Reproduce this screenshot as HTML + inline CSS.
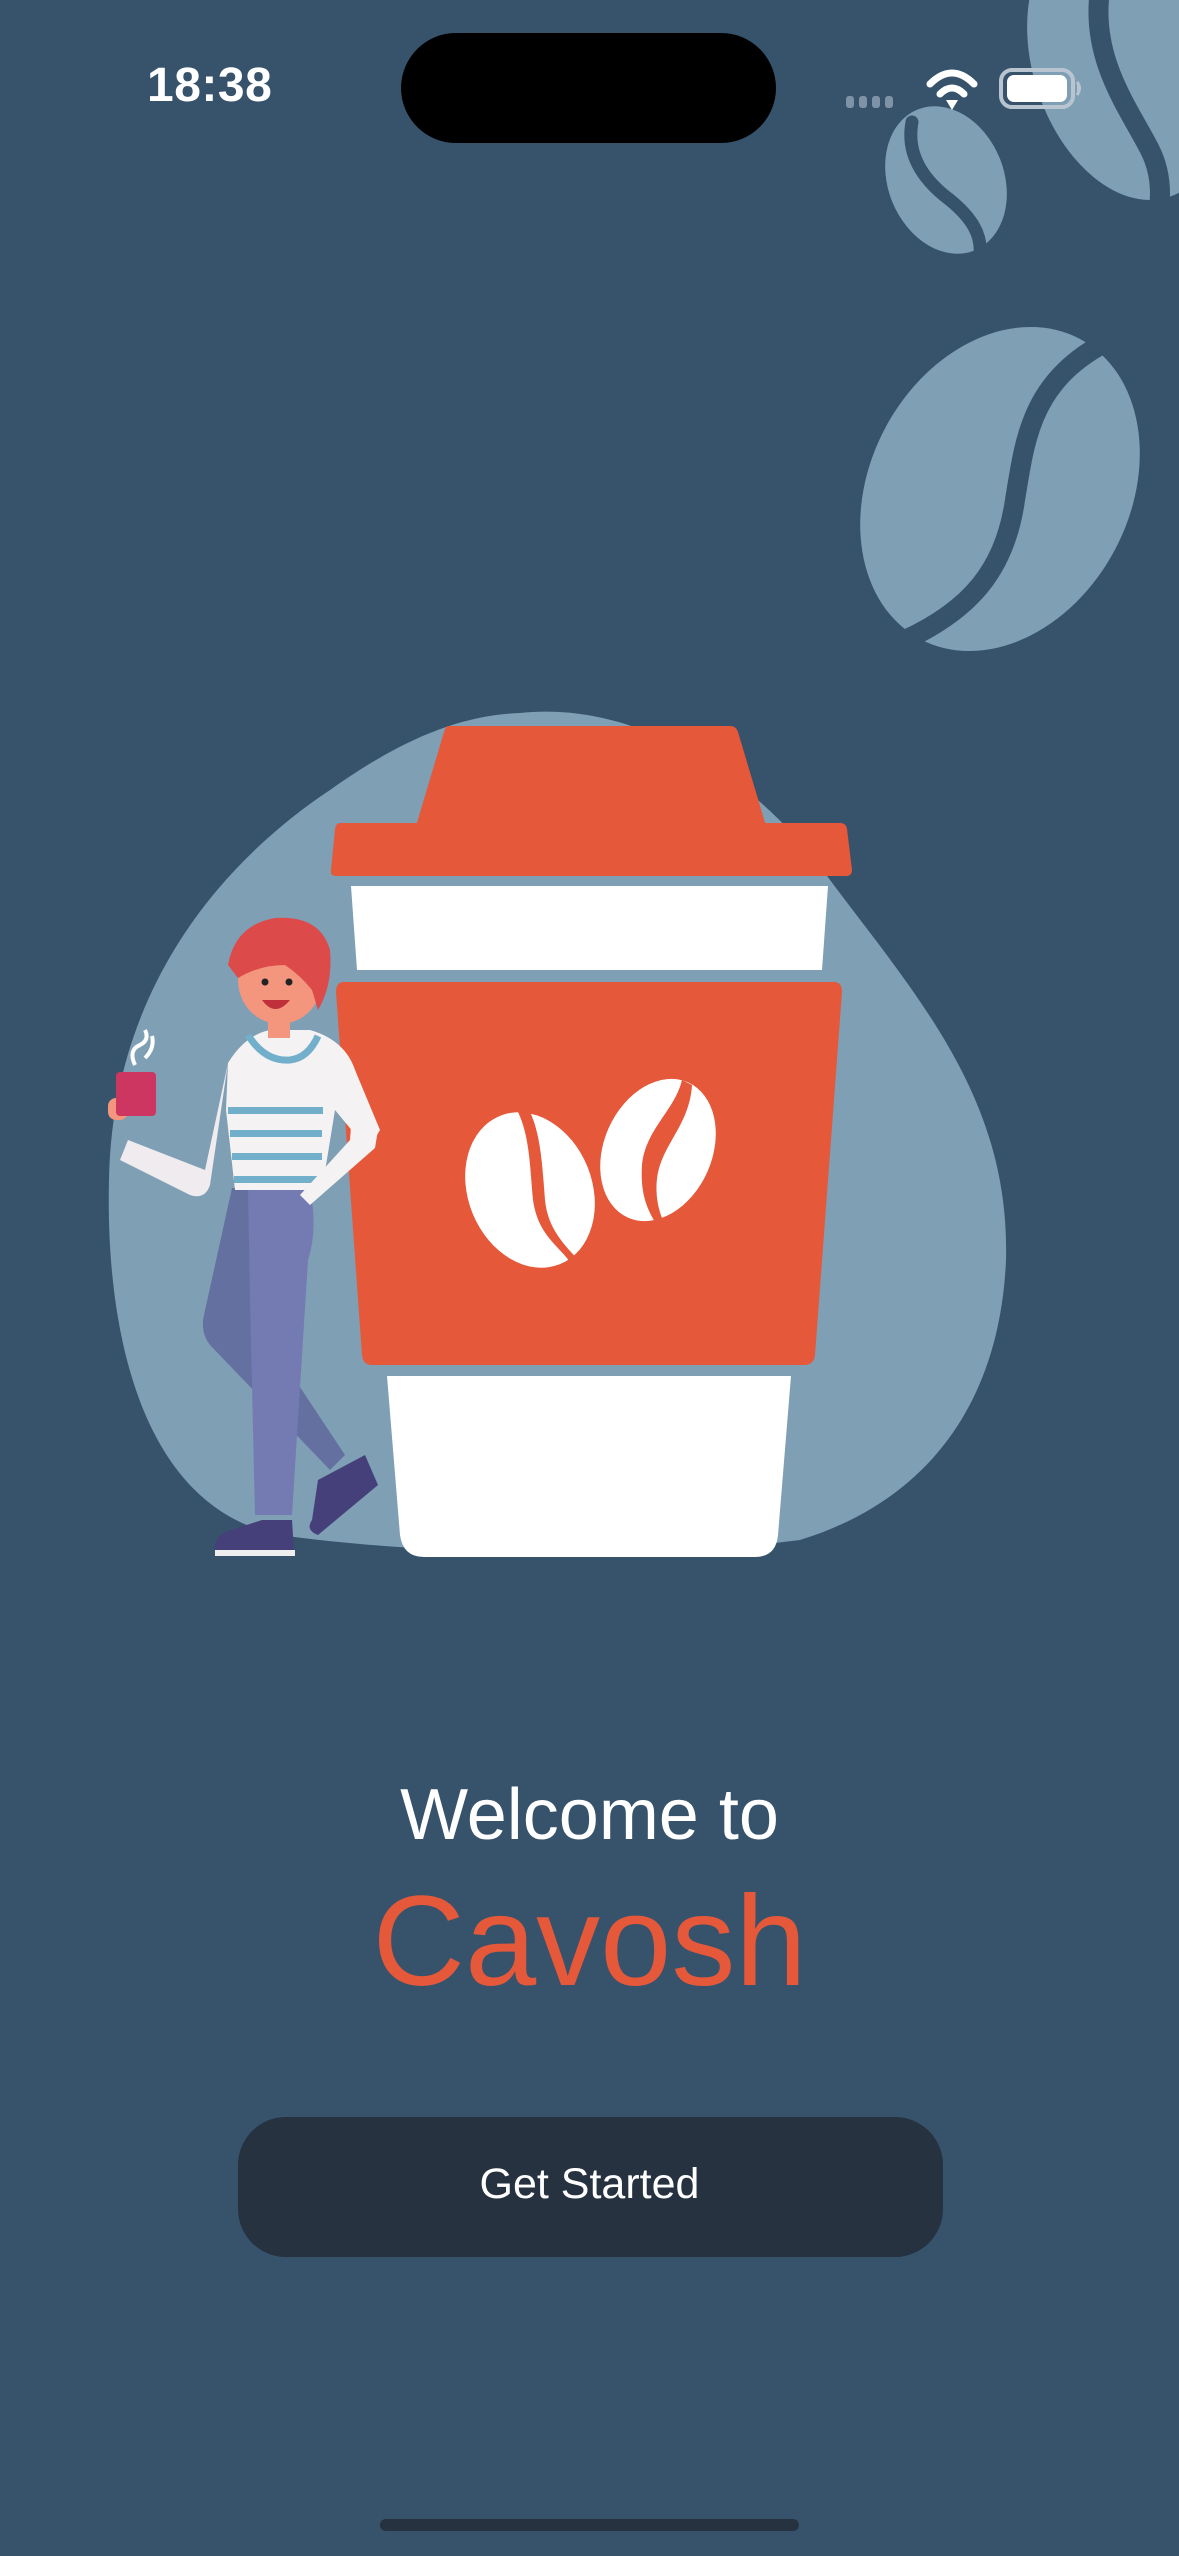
<!DOCTYPE html>
<html><head><meta charset="utf-8"><style>
html,body{margin:0;padding:0;}
body{width:1179px;height:2556px;background:#36536B;position:relative;overflow:hidden;font-family:"Liberation Sans",sans-serif;}
svg{position:absolute;left:0;top:0;}
.t{position:absolute;left:0;width:1179px;text-align:center;}
</style></head><body>
<svg width="1179" height="2556" viewBox="0 0 1179 2556">
<g fill="#7F9FB5">
<ellipse cx="1125" cy="62" rx="92" ry="142" transform="rotate(-18 1125 62)"/>
<ellipse cx="946" cy="180" rx="58" ry="76" transform="rotate(-22 946 180)"/>
<ellipse cx="1000" cy="489" rx="130" ry="170" transform="rotate(28 1000 489)"/>
</g>
<g fill="none" stroke="#36536B" stroke-width="20" stroke-linecap="round">
<path d="M1100 -10 C1090 60 1130 110 1150 150 C1165 180 1160 210 1155 230"/>
<path d="M912 122 C905 160 930 185 950 200 C972 218 982 235 980 255" stroke-width="13"/>
<path d="M1110 340 C1030 380 1025 440 1015 500 C1005 570 970 610 905 640"/>
</g>
<path d="M520 713 C640 700 760 780 830 880 C920 1000 1010 1100 1006 1260 C1000 1400 930 1500 800 1540 C650 1560 420 1555 280 1535 C150 1510 105 1350 109 1180 C112 1000 210 870 330 790 C400 740 460 715 520 713 Z" fill="#7F9FB5"/>
<path d="M448 726 L730 726 Q736 726 738 732 L766 826 L416 826 L444 732 Q446 726 448 726 Z" fill="#E5583A"/>
<path d="M340 823 L840 823 Q846 823 847 829 L852 870 Q852 876 846 876 L336 876 Q330 876 331 870 L335 829 Q336 823 340 823 Z" fill="#E5583A"/>
<path d="M351 886 L828 886 L822 970 L357 970 Z" fill="#fff"/>
<path d="M344 982 L834 982 Q842 982 842 992 L815 1355 Q814 1365 804 1365 L372 1365 Q363 1365 362 1355 L336 992 Q336 982 344 982 Z" fill="#E5583A"/>
<path d="M387 1376 L791 1376 L778 1535 Q776 1557 755 1557 L424 1557 Q403 1557 400 1535 Z" fill="#fff"/>
<g fill="#fff">
<ellipse cx="530" cy="1190" rx="62" ry="80" transform="rotate(-22 530 1190)"/>
<ellipse cx="658" cy="1150" rx="54" ry="74" transform="rotate(24 658 1150)"/>
</g>
<g fill="#E5583A">
<path d="M517 1110 C530 1135 530 1170 533 1200 C538 1235 558 1245 570 1262 L580 1262 C565 1245 548 1230 545 1200 C542 1160 540 1130 528 1108 Z"/>
<path d="M682 1080 C675 1110 645 1130 642 1165 C640 1195 648 1210 655 1222 L662 1218 C655 1200 655 1180 660 1165 C668 1140 690 1120 692 1085 Z"/>
</g>
<g>
<path d="M232 1188 L290 1188 L282 1360 L345 1455 L330 1470 L210 1345 Q200 1332 204 1315 Z" fill="#6470A0"/>
<path d="M318 1480 L365 1455 L378 1485 L318 1535 Q305 1530 312 1520 Z" fill="#45407A"/>
<path d="M248 1188 L310 1188 Q318 1230 308 1260 L292 1515 L255 1515 L250 1300 Z" fill="#737BB2"/>
<path d="M262 1520 L292 1520 L294 1552 L215 1552 Q212 1540 225 1532 Z" fill="#45407A"/>
<rect x="215" y="1550" width="80" height="6" fill="#eee"/>
<path d="M228 1063 Q245 1035 270 1030 L310 1030 Q345 1040 355 1070 L380 1130 L368 1150 L335 1110 L322 1190 L235 1190 L226 1110 Z" fill="#F4F2F2"/>
<g fill="#72AFCB"><rect x="228" y="1107" width="95" height="7"/><rect x="230" y="1130" width="92" height="7"/><rect x="232" y="1153" width="90" height="7"/><rect x="234" y="1176" width="88" height="7"/></g>
<path d="M355 1070 L378 1130 L375 1148 L310 1205 L300 1195 L350 1140 Z" fill="#F4F2F2"/>
<path d="M228 1063 L210 1185 Q205 1200 190 1195 L120 1160 L128 1140 L205 1170 Z" fill="#EFEBEF"/>
<path d="M248 1035 Q265 1062 290 1060 Q308 1058 318 1036" fill="none" stroke="#72AFCB" stroke-width="7"/>
<rect x="268" y="1010" width="22" height="28" fill="#F4957E"/>
<ellipse cx="280" cy="980" rx="42" ry="44" fill="#F4957E"/>
<path d="M228 965 Q235 925 275 918 Q320 915 330 950 Q333 985 318 1010 L312 990 Q300 975 285 965 Q260 965 238 978 Z" fill="#DC4A4A"/>
<circle cx="265" cy="982" r="3.5" fill="#222"/><circle cx="289" cy="982" r="3.5" fill="#222"/>
<path d="M262 1000 Q275 1018 290 1000 Z" fill="#C0303A"/>
<rect x="108" y="1098" width="20" height="22" rx="8" fill="#F4957E"/>
<rect x="116" y="1072" width="40" height="44" rx="4" fill="#CC3660"/>
<path d="M135 1065 Q128 1050 140 1045 Q150 1040 145 1030 M145 1058 Q155 1048 152 1036" fill="none" stroke="#fff" stroke-width="4"/>
</g>
<rect x="401" y="33" width="375" height="110" rx="55" fill="#000"/>
<g fill="#7E93A6"><rect x="846" y="96" width="8" height="12" rx="3"/><rect x="859" y="96" width="8" height="12" rx="3"/><rect x="872" y="96" width="8" height="12" rx="3"/><rect x="885" y="96" width="8" height="12" rx="3"/></g>
<g fill="none" stroke="#fff" stroke-width="7" stroke-linecap="round">
<path d="M930 84 Q952 62 974 84"/><path d="M940 94 Q952 82 964 94"/>
</g>
<path d="M946 100 L958 100 L952 110 Z" fill="#fff"/>
<rect x="1001" y="70" width="72" height="37" rx="11" fill="none" stroke="#B8C5D0" stroke-width="4"/>
<rect x="1007" y="75" width="60" height="27" rx="7" fill="#fff"/>
<path d="M1077 82 Q1082 88 1077 95" fill="#B8C5D0" stroke="#B8C5D0" stroke-width="3"/>
<rect x="238" y="2117" width="705" height="140" rx="48" fill="#26323F"/>
<rect x="380" y="2519" width="419" height="12" rx="6" fill="#26323F"/>
</svg>
<div class="t" style="left:147px;width:auto;top:58px;font-size:48px;font-weight:bold;color:#fff;letter-spacing:0.5px;">18:38</div>
<div class="t" style="top:1774px;font-size:72px;color:#fff;">Welcome to</div>
<div class="t" style="top:1868px;font-size:128px;color:#E5583A;">Cavosh</div>
<div class="t" style="top:2160px;font-size:43px;color:#fff;">Get Started</div>
</body></html>
